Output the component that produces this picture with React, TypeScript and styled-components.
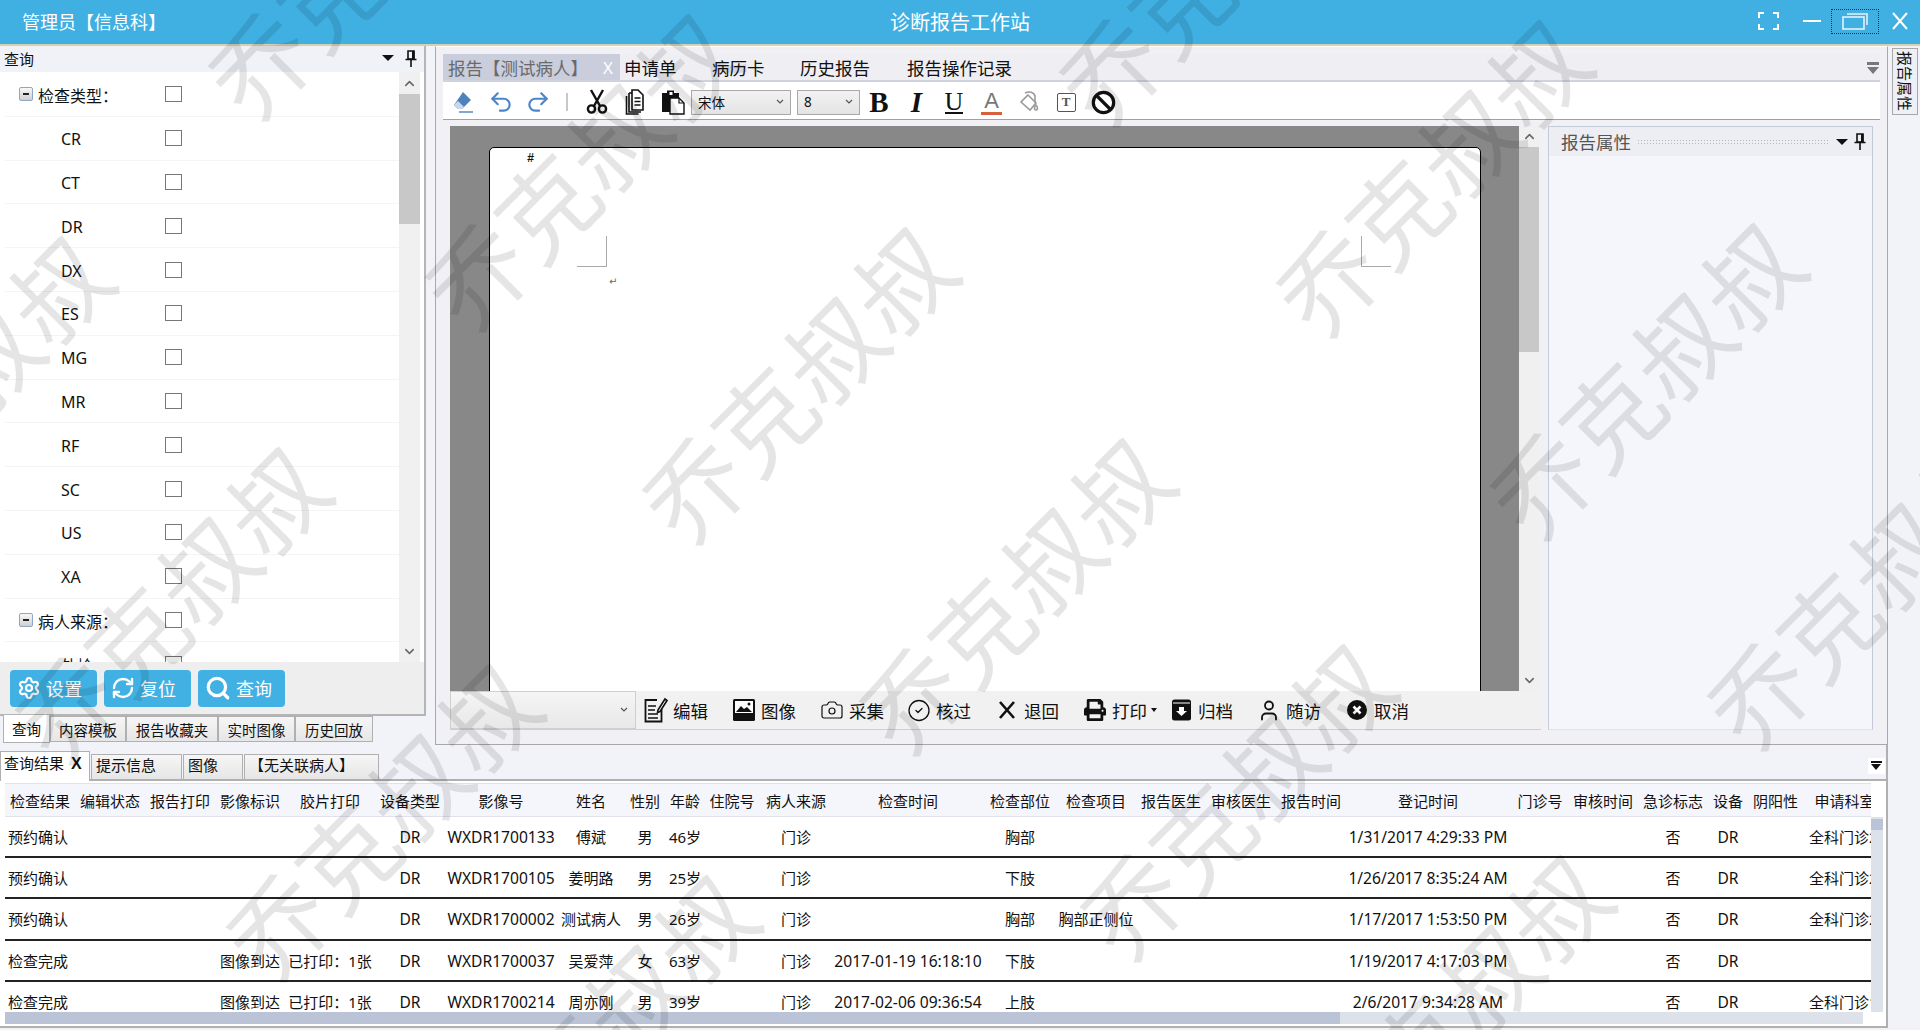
import React from 'react';
import styled, { createGlobalStyle } from 'styled-components';
import { Settings, RefreshCw, Search, Undo2, Redo2, Camera, CircleCheck, User, ChevronUp, ChevronDown } from 'lucide-react';
import { FaPrint } from 'react-icons/fa';

const FONT = '"Noto Sans", "Noto Sans CJK SC", sans-serif';

const GlobalStyle = createGlobalStyle`
  html, body { margin: 0; padding: 0; height: 100%; overflow: hidden; background: #f1f3f9; }
  body { font-family: ${FONT}; color: #111; }
  * { box-sizing: border-box; }
`;

const Page = styled.div`
  position: relative;
  width: 1920px;
  height: 1030px;
  display: flex;
  flex-direction: column;
  overflow: hidden;
  background: #f1f3f9;
`;

const TitleBar = styled.header`
  height: 46px;
  flex: none;
  display: grid;
  grid-template-columns: 1fr auto 1fr;
  align-items: center;
  padding-bottom: 2px;
  background: #40afe2;
  border-bottom: 2px solid #d7cfae;
  color: #fff;
`;
const UserName = styled.div`font-size: 18px; margin-left: 22px;`;
const AppTitle = styled.div`font-size: 20px;`;
const WindowButtons = styled.div`
  display: flex;
  justify-content: flex-end;
  align-items: center;
`;
const WinButton = styled.span<{ $w: number; $focus?: boolean }>`
  width: ${p => p.$w}px;
  height: 25px;
  display: flex;
  align-items: center;
  justify-content: center;
  border: 1px dotted ${p => (p.$focus ? '#10324a' : 'transparent')};
`;

const Main = styled.div`
  height: 699px;
  flex: none;
  display: flex;
`;

/* left query panel */
const LeftColumn = styled.aside`
  width: 426px;
  flex: none;
  display: flex;
  flex-direction: column;
`;
const QueryPanel = styled.section`
  height: 670px;
  display: flex;
  flex-direction: column;
  border-right: 2px solid #b5b5b5;
  border-bottom: 2px solid #b5b5b5;
  background: #fff;
`;
const PanelHead = styled.div`
  height: 26px;
  flex: none;
  display: flex;
  align-items: center;
  padding: 0 7px 2px 4px;
  background: #f0f2f8;
  font-size: 15px;
`;
const Spacer = styled.span`flex: 1;`;
const Gap = styled.span<{ $w: number }>`width: ${p => p.$w}px; flex: none;`;
const Caret = styled.span<{ $color?: string }>`
  width: 0;
  height: 0;
  border-left: 6px solid transparent;
  border-right: 6px solid transparent;
  border-top: 6px solid ${p => p.$color || '#111'};
`;
const TreeWrap = styled.div`
  flex: 1;
  min-height: 0;
  display: flex;
  overflow: hidden;
  padding: 0 4px 0 5px;
`;
const Tree = styled.div`flex: 1; min-width: 0; margin-top: 1px;`;
const TreeRow = styled.div<{ $group?: boolean }>`
  height: 43.8px;
  display: flex;
  align-items: center;
  padding-left: ${p => (p.$group ? 14 : 56)}px;
  border-bottom: 1px solid #f4f4f4;
  font-size: 16px;
`;
const TreeLabel = styled.span`flex: none; width: 104px; padding-top: 2px;`;
const GroupLabel = styled.span`flex: none; width: 127px; margin-left: 4px; padding-top: 2px;`;
const Check = styled.span`
  width: 17px;
  height: 16px;
  flex: none;
  border: 1px solid #777;
  background: #fff;
`;
const Expander = styled.span`
  width: 14px;
  height: 14px;
  flex: none;
  display: flex;
  align-items: center;
  justify-content: center;
  border: 1px solid #8fa6c4;
  border-radius: 2px;
  background: linear-gradient(#f8f8f8, #cfcfcf);
  &::after { content: ''; width: 6px; height: 2px; background: #222; }
`;
const GroupExpander = styled(Expander)`margin-right: 1px;`;
const VScroll = styled.div<{ $w: number }>`
  width: ${p => p.$w}px;
  flex: none;
  display: flex;
  flex-direction: column;
  align-items: center;
  background: #f0f0f0;
  color: #666;
`;
const ScrollEnd = styled.div<{ $h: number }>`
  height: ${p => p.$h}px;
  flex: none;
  display: flex;
  align-items: center;
  justify-content: center;
`;
const ScrollThumb = styled.div<{ $h: number }>`
  width: 100%;
  height: ${p => p.$h}px;
  flex: none;
  background: #c8c8c8;
`;
const ButtonBar = styled.div`
  height: 52px;
  flex: none;
  display: flex;
  gap: 7px;
  padding: 8px 0 0 10px;
  background: #eeeeee;
`;
const ActionButton = styled.button`
  width: 87px;
  height: 37px;
  display: flex;
  align-items: center;
  gap: 5px;
  padding: 0 0 2px 7px;
  border: 0;
  border-radius: 4px;
  background: #41b0e3;
  color: #fff;
  font: 18px ${FONT};
`;
const SideTabs = styled.div`
  display: flex;
  padding-left: 3px;
  height: 29px;
  align-items: flex-start;
`;
const SideTab = styled.span<{ $w: number; $active?: boolean }>`
  width: ${p => p.$w}px;
  height: ${p => (p.$active ? 28 : 26)}px;
  margin-top: ${p => (p.$active ? -1 : 0)}px;
  display: flex;
  align-items: center;
  justify-content: center;
  font-size: 14.5px;
  border: 1px solid #b0b0b0;
  border-top: ${p => (p.$active ? '0' : '1px solid #b0b0b0')};
  background: ${p => (p.$active ? '#fff' : 'linear-gradient(#f6f6f6, #e6e6e6)')};
`;

/* centre report panel */
const CenterFrame = styled.main`
  margin-left: 9px;
  width: 1453px;
  flex: none;
  display: flex;
  flex-direction: column;
  padding: 7px 7px 9px 7px;
  border: 1px solid #a8a8a8;
  border-top-color: #fff;
  background: #f0f0f5;
`;
const TabRow = styled.div`
  height: 28px;
  flex: none;
  display: flex;
  align-items: stretch;
  border-bottom: 2px solid #cfd3e0;
  background: #eeeef3;
`;
const ReportTab = styled.span<{ $w: number; $active?: boolean }>`
  width: ${p => p.$w}px;
  display: flex;
  align-items: center;
  padding-left: ${p => (p.$active ? 5 : 4)}px;
  font-size: 17.5px;
  color: ${p => (p.$active ? '#6a6a6a' : '#111')};
  background: ${p => (p.$active ? '#c9cddc' : 'transparent')};
`;
const TabClose = styled.span`
  margin-left: auto;
  margin-right: 7px;
  color: #fff;
  font-size: 17px;
`;
const TabMenu = styled.span`
  margin-left: auto;
  margin-right: 1px;
  width: 12px;
  padding-top: 8px;
  display: flex;
  flex-direction: column;
  gap: 2px;
  &::before { content: ''; height: 3px; background: #777; }
  &::after { content: ''; width: 0; height: 0; border-left: 6px solid transparent; border-right: 6px solid transparent; border-top: 7px solid #777; }
`;
const Toolbar = styled.div`
  height: 38px;
  flex: none;
  width: 1437px;
  display: flex;
  align-items: center;
  padding-top: 3px;
  background: #fff;
  border-bottom: 1px solid #a0a0a0;
`;
const ToolSlot = styled.span<{ $w: number }>`
  width: ${p => p.$w}px;
  flex: none;
  display: flex;
  align-items: center;
  justify-content: center;
`;
const ToolSep = styled.span`
  width: 2px;
  height: 18px;
  margin: 0 10px;
  background: #c8c8c8;
`;
const ComboBox = styled.span<{ $w: number }>`
  width: ${p => p.$w}px;
  height: 25px;
  flex: none;
  display: flex;
  align-items: center;
  justify-content: space-between;
  padding: 0 6px;
  border: 1px solid #a9a9a9;
  background: linear-gradient(#f2f2f2, #e4e4e4);
  font-size: 13.5px;
  color: #111;
`;
const SerifLetter = styled.span<{ $italic?: boolean; $under?: boolean; $color?: string }>`
  font: ${p => (p.$italic ? 'italic ' : '')}bold 29px "Liberation Serif", serif;
  line-height: 27px;
  color: ${p => p.$color || '#111'};
  ${p => (p.$under ? 'font-weight: normal; border-bottom: 2px solid #111; line-height: 21px; font-family: "Liberation Serif", serif; font-size: 26px;' : '')}
`;
const FontColorA = styled.span`
  font: 22px/22px "Liberation Sans", sans-serif;
  color: #777;
  border-bottom: 3px solid #d8603f;
  padding: 0 3px;
`;
const BoxT = styled.span`
  width: 19px;
  height: 19px;
  display: flex;
  align-items: center;
  justify-content: center;
  border: 1.5px solid #555;
  border-radius: 2px;
  font: bold 13px "Liberation Serif", serif;
  color: #555;
`;
const WorkArea = styled.div`
  flex: 1;
  min-height: 0;
  display: flex;
  padding: 6px 0 5px 7px;
`;
const EditorColumn = styled.div`
  width: 1091px;
  flex: none;
  display: flex;
  flex-direction: column;
`;
const EditorRow = styled.div`
  height: 565px;
  flex: none;
  display: flex;
`;
const DocArea = styled.div`
  width: 1069px;
  flex: none;
  padding: 21px 38px 0 39px;
  overflow: hidden;
  background: #888888;
`;
const Sheet = styled.div`
  position: relative;
  height: 600px;
  background: #fff;
  border: 1px solid #000;
  border-radius: 5px 5px 0 0;
`;
const Hash = styled.span`
  position: absolute;
  left: 37px;
  top: 4px;
  font: bold 12px "Liberation Mono", monospace;
`;
const CropMark = styled.span<{ $x: number; $side: 'left' | 'right' }>`
  position: absolute;
  left: ${p => p.$x}px;
  top: 88px;
  width: 30px;
  height: 31px;
  border-bottom: 1px solid #aaa;
  ${p => (p.$side === 'left' ? 'border-right: 1px solid #aaa;' : 'border-left: 1px solid #aaa;')}
`;
const ReturnMark = styled.span`
  position: absolute;
  left: 119px;
  top: 128px;
  font: 10px "DejaVu Sans", sans-serif;
  color: #666;
`;
const ActionRow = styled.div`
  height: 39px;
  flex: none;
  display: flex;
  align-items: center;
  background: #f1f1f1;
  border-bottom: 1px solid #cfcfcf;
`;
const ActionSelect = styled.span`
  width: 186px;
  height: 38px;
  flex: none;
  display: flex;
  align-items: center;
  justify-content: flex-end;
  padding-right: 7px;
  margin-right: 8px;
  border: 1px solid #cfcfcf;
  background: linear-gradient(#f5f5f5, #e8e8e8);
`;
const ActionItem = styled.span<{ $w: number }>`
  width: ${p => p.$w}px;
  flex: none;
  display: flex;
  align-items: center;
  gap: 5px;
  font-size: 17.5px;
`;
const ActionIcon = styled.span`
  width: 24px;
  height: 26px;
  flex: none;
  display: flex;
  align-items: center;
  justify-content: center;
`;
const MiniCaret = styled.span`
  width: 0;
  height: 0;
  margin-left: -1px;
  border-left: 3px solid transparent;
  border-right: 3px solid transparent;
  border-top: 4px solid #111;
`;
const PropsPanel = styled.aside`
  margin-left: 7px;
  width: 325px;
  flex: none;
  display: flex;
  flex-direction: column;
  border: 1px solid #c5cadb;
  border-bottom-color: #dfe2ec;
  background: #f5f6fb;
`;
const PropsHead = styled.div`
  height: 29px;
  flex: none;
  display: flex;
  align-items: center;
  gap: 6px;
  padding: 0 6px 0 12px;
  background: #eceef3;
  font-size: 17.5px;
  color: #555;
`;
const Dots = styled.span`
  flex: 1;
  height: 6px;
  margin-right: 2px;
  background-image: radial-gradient(#b9b9b9 1px, transparent 1px);
  background-size: 3px 3px;
`;
const RightStrip = styled.div`
  flex: 1;
  padding: 2px 3px 0 4px;
`;
const VerticalTab = styled.span`
  width: 26px;
  height: 67px;
  display: flex;
  align-items: center;
  justify-content: center;
  border: 1px solid #a8a8a8;
  background: #eef0f7;
  writing-mode: vertical-rl;
  text-orientation: sideways;
  font-size: 15px;
`;

/* bottom results */
const ResultsPanel = styled.section`
  flex: 1;
  width: 1888px;
  min-height: 0;
  display: flex;
  flex-direction: column;
  margin-bottom: 2px;
  border-right: 2px solid #b0b0b0;
  border-bottom: 2px solid #b0b0b0;
`;
const ResultTabs = styled.div`
  height: 36px;
  flex: none;
  display: flex;
  align-items: flex-end;
  position: relative;
  border-bottom: 2px solid #b0b0b0;
`;
const ResultTab = styled.span<{ $w: number; $active?: boolean }>`
  width: ${p => p.$w}px;
  height: ${p => (p.$active ? 30 : 25)}px;
  margin-right: 1px;
  margin-bottom: ${p => (p.$active ? -2 : 0)}px;
  display: flex;
  align-items: flex-start;
  padding: ${p => (p.$active ? '1px 0 0 3px' : '0 0 0 4px')};
  font-size: 15px;
  line-height: 21px;
  border: 1px solid #b0b0b0;
  border-bottom: 0;
  background: ${p => (p.$active ? '#fff' : 'linear-gradient(#f6f6f6, #e6e6e6)')};
  position: relative;
`;
const ResultClose = styled.span`
  margin-left: 7px;
  font: bold 16px/22px "Liberation Sans", sans-serif;
`;
const GridMenu = styled.span`
  position: absolute;
  right: 1px;
  top: 13px;
  width: 17px;
  height: 16px;
  padding: 3px 3px 0;
  display: flex;
  flex-direction: column;
  gap: 1px;
  background: #fff;
  &::before { content: ''; height: 2px; background: #111; }
  &::after { content: ''; width: 0; height: 0; border-left: 5.5px solid transparent; border-right: 5.5px solid transparent; border-top: 6px solid #111; }
`;
const GridArea = styled.div`
  flex: 1;
  min-height: 0;
  display: flex;
  flex-direction: column;
  padding: 2px 0 0 5px;
  background: #fff;
`;
const GridBody = styled.div`
  flex: none;
  height: 229px;
  display: flex;
`;
const GridClip = styled.div`
  width: 1866px;
  flex: none;
  overflow: hidden;
`;
const COLUMNS = '70px 70px 70px 70px 90px 70px 112px 68px 40px 40px 54px 74px 150px 74px 78px 72px 68px 72px 162px 62px 64px 76px 34px 61px 77px';
const HeadRow = styled.div`
  height: 34px;
  display: grid;
  grid-template-columns: ${COLUMNS};
  background: #f5f6fc;
  border-top: 1px solid #e0e2ea;
  border-bottom: 1px solid #e0e2ea;
  font-size: 15px;
`;
const BodyRow = styled.div`
  height: 41.2px;
  display: grid;
  grid-template-columns: ${COLUMNS};
  border-bottom: 2px solid #222;
  font-size: 15px;
`;
const Cell = styled.span<{ $left?: boolean; $latin?: boolean }>`
  display: flex;
  align-items: center;
  justify-content: ${p => (p.$left ? 'flex-start' : 'center')};
  padding-left: ${p => (p.$left ? 3 : 0)}px;
  padding-top: ${p => (p.$latin ? 1 : 0)}px;
  font-size: ${p => (p.$latin ? 15.6 : 15)}px;
  white-space: nowrap;
  min-width: 0;
`;
const GridScrollV = styled.div`
  width: 12px;
  margin: 34px 0 0 0;
  flex: none;
  background: #dde1ea;
`;
const GridThumbV = styled.div`
  height: 11px;
  margin-top: 2px;
  background: #bac4d6;
`;
const GridScrollH = styled.div`
  width: 1858px;
  height: 12px;
  flex: none;
  background: #dde1ea;
`;
const GridThumbH = styled.div`
  width: 1335px;
  height: 100%;
  background: #bac4d6;
`;

/* watermark over the whole window */
const WatermarkLayer = styled.div`
  position: absolute;
  inset: 0;
  overflow: hidden;
  pointer-events: none;
`;
const Mark = styled.span<{ $x: number; $y: number }>`
  position: absolute;
  left: ${p => p.$x}px;
  top: ${p => p.$y}px;
  transform: translate(-50%, -50%) rotate(-45deg);
  font: 400 98px/1 "Noto Sans CJK SC", sans-serif;
  white-space: nowrap;
  color: rgba(0, 0, 0, 0.1);
`;

const Pin = ({ color = '#111' }: { color?: string }) => (
  <svg width="12" height="17" viewBox="0 0 12 17">
    <path d="M3 1h6v8H3z" fill="none" stroke={color} strokeWidth="1.6" />
    <path d="M7 1h2.4v8H7z" fill={color} />
    <path d="M0.5 9.5h11M6 9.5V17" stroke={color} strokeWidth="1.6" />
  </svg>
);

const EraserIcon = () => (
  <svg width="24" height="26" viewBox="0 0 24 26">
    <path d="M12 3l8 8-9 9H7l-4-4z" fill="#4f81bd" />
    <path d="M3 16l4 4h4l2-2-6-6z" fill="#c7d7ec" />
    <path d="M8 23h14" stroke="#4f81bd" strokeWidth="1.4" />
  </svg>
);
const ScissorsIcon = () => (
  <svg width="24" height="26" viewBox="0 0 24 26" fill="none" stroke="#111" strokeWidth="2.4">
    <path d="M6 1l9 16M18 1L9 17" />
    <circle cx="6.5" cy="20" r="3.6" />
    <circle cx="17.5" cy="20" r="3.6" />
  </svg>
);
const CopyIcon = () => (
  <svg width="20" height="26" viewBox="0 0 20 26" fill="none" stroke="#111" strokeWidth="1.6">
    <path d="M7 1h6l5 5v15H7z" />
    <path d="M4 4h3M4 4v19h12" />
    <path d="M1.5 7v18h12" />
    <path d="M9.5 9h6M9.5 12.5h6M9.5 16h6" strokeWidth="1.4" />
  </svg>
);
const PasteIcon = () => (
  <svg width="24" height="26" viewBox="0 0 24 26">
    <path d="M1 4h5V1.5h7V4h5v19H1z" fill="#111" />
    <path d="M8.5 3h3v3h-3z" fill="#fff" />
    <path d="M9 9h9l5 5v11H9z" fill="#fff" stroke="#111" strokeWidth="1.4" />
    <path d="M18 9v5h5" fill="none" stroke="#111" strokeWidth="1.2" />
  </svg>
);
const ComboArrow = () => (
  <svg width="8" height="6" viewBox="0 0 8 6" fill="none" stroke="#555" strokeWidth="1.2"><path d="M1 1l3 3 3-3" /></svg>
);
const BucketIcon = () => (
  <svg width="22" height="24" viewBox="0 0 22 24" fill="none" stroke="#9a9a9a" strokeWidth="1.6">
    <path d="M10 5l8 8-6 7-9-8z" />
    <path d="M7 3c4-2 9-1 10 3v7" />
    <path d="M18 15c2 2 2 5 0 5s-2-3 0-5z" />
  </svg>
);
const NoIcon = () => (
  <svg width="25" height="25" viewBox="0 0 25 25" fill="none" stroke="#111" strokeWidth="3.2">
    <circle cx="12.5" cy="12.5" r="10.2" />
    <path d="M5.5 5.5l14 14" />
  </svg>
);
const EditIcon = () => (
  <svg width="24" height="26" viewBox="0 0 24 26" fill="none" stroke="#111" strokeWidth="1.8">
    <path d="M13 3H1.5v21.5h16V12" />
    <path d="M4 9h8M4 13h7M4 17h10M4 21h10" strokeWidth="1.6" />
    <path d="M14 13l7-11 2 1.5-7 11-2.5 1z" fill="#fff" strokeWidth="1.6" />
  </svg>
);
const PictureIcon = () => (
  <svg width="22" height="24" viewBox="0 0 22 24">
    <rect x="0" y="1" width="22" height="22" rx="1.5" fill="#111" />
    <rect x="2" y="3" width="18" height="12" fill="#fff" />
    <path d="M3 14l5-6 3 3 3-2 5 5z" fill="#111" />
    <circle cx="16" cy="6" r="1.5" fill="#111" />
  </svg>
);
const XIcon = ({ size = 18, color = '#111', width = 2.6 }: { size?: number; color?: string; width?: number }) => (
  <svg width={size} height={size} viewBox="0 0 18 18" fill="none" stroke={color} strokeWidth={width}>
    <path d="M2 1l14 16M16 1L2 17" />
  </svg>
);
const ArchiveIcon = () => (
  <svg width="19" height="22" viewBox="0 0 19 22">
    <rect x="0" y="0.5" width="19" height="21" rx="2.5" fill="#111" />
    <path d="M1 4h17" stroke="#fff" strokeWidth="1" />
    <path d="M7 8h5v4h3l-5.5 5L4 12h3z" fill="#fff" />
  </svg>
);
const CancelIcon = () => (
  <svg width="20" height="20" viewBox="0 0 20 20">
    <circle cx="10" cy="10" r="10" fill="#111" />
    <path d="M6.5 6.5l7 7M13.5 6.5l-7 7" stroke="#fff" strokeWidth="2.6" />
  </svg>
);

const treeTypes = ['CR', 'CT', 'DR', 'DX', 'ES', 'MG', 'MR', 'RF', 'SC', 'US', 'XA'];

const headers = ['检查结果', '编辑状态', '报告打印', '影像标识', '胶片打印', '设备类型', '影像号', '姓名', '性别', '年龄', '住院号', '病人来源', '检查时间', '检查部位', '检查项目', '报告医生', '审核医生', '报告时间', '登记时间', '门诊号', '审核时间', '急诊标志', '设备', '阴阳性', '申请科室'];

const makeRow = (status: string, mark: string, film: string, id: string, name: string, sex: string, age: string, time: string, part: string, item: string, reg: string, dept: string) =>
  [status, '', '', mark, film, 'DR', id, name, sex, age, '', '门诊', time, part, item, '', '', '', reg, '', '', '否', 'DR', '', dept];

const rows = [
  makeRow('预约确认', '', '', 'WXDR1700133', '傅斌', '男', '46岁', '', '胸部', '', '1/31/2017 4:29:33 PM', '全科门诊2室'),
  makeRow('预约确认', '', '', 'WXDR1700105', '姜明路', '男', '25岁', '', '下肢', '', '1/26/2017 8:35:24 AM', '全科门诊2室'),
  makeRow('预约确认', '', '', 'WXDR1700002', '测试病人', '男', '26岁', '', '胸部', '胸部正侧位', '1/17/2017 1:53:50 PM', '全科门诊2室'),
  makeRow('检查完成', '图像到达', '已打印：1张', 'WXDR1700037', '吴爱萍', '女', '63岁', '2017-01-19 16:18:10', '下肢', '', '1/19/2017 4:17:03 PM', ''),
  makeRow('检查完成', '图像到达', '已打印：1张', 'WXDR1700214', '周亦刚', '男', '39岁', '2017-02-06 09:36:54', '上肢', '', '2/6/2017 9:34:28 AM', '全科门诊1室'),
];

const latinColumns = [5, 6, 12, 18, 22];

const marks = [
  [361, -42], [578, 169], [795, 382], [1012, 593], [1233, 799], [1450, 1010],
  [-49, 391], [168, 602], [379, 819], [596, 1030],
  [1212, -36], [1429, 175], [1643, 378], [1860, 588],
];

const App = () => {
  return (
    <Page>
      <GlobalStyle />
      <TitleBar>
        <UserName>管理员【信息科】</UserName>
        <AppTitle>诊断报告工作站</AppTitle>
        <WindowButtons>
          <WinButton $w={50}>
            <svg width="21" height="18" viewBox="0 0 21 18" fill="none" stroke="#fff" strokeWidth="2">
              <path d="M1 6V1h5M15 1h5v5M20 12v5h-5M6 17H1v-5" />
            </svg>
          </WinButton>
          <WinButton $w={38}>
            <svg width="18" height="4" viewBox="0 0 18 4"><path d="M0 2h18" stroke="#fff" strokeWidth="2" /></svg>
          </WinButton>
          <WinButton $w={48} $focus>
            <svg width="26" height="17" viewBox="0 0 26 17" fill="none" stroke="#dff3fc" strokeWidth="1.6">
              <rect x="1" y="4" width="21" height="12" />
              <path d="M5 1h20v11" />
            </svg>
          </WinButton>
          <WinButton $w={41}><XIcon size={18} color="#fff" width={2} /></WinButton>
        </WindowButtons>
      </TitleBar>

      <Main>
        <LeftColumn>
          <QueryPanel>
            <PanelHead>
              查询
              <Spacer />
              <Caret />
              <Gap $w={11} />
              <Pin />
            </PanelHead>
            <TreeWrap>
              <Tree>
                <TreeRow $group><GroupExpander /><GroupLabel>检查类型：</GroupLabel><Check /></TreeRow>
                {treeTypes.map(t => (
                  <TreeRow key={t}><TreeLabel>{t}</TreeLabel><Check /></TreeRow>
                ))}
                <TreeRow $group><GroupExpander /><GroupLabel>病人来源：</GroupLabel><Check /></TreeRow>
                <TreeRow><TreeLabel>外检</TreeLabel><Check /></TreeRow>
              </Tree>
              <VScroll $w={21}>
                <ScrollEnd $h={22}><ChevronUp size={15} strokeWidth={2.4} /></ScrollEnd>
                <ScrollThumb $h={130} />
                <Spacer />
                <ScrollEnd $h={22}><ChevronDown size={15} strokeWidth={2.4} /></ScrollEnd>
              </VScroll>
            </TreeWrap>
            <ButtonBar>
              <ActionButton><Settings size={24} strokeWidth={2.2} />设置</ActionButton>
              <ActionButton><RefreshCw size={24} strokeWidth={2.4} />复位</ActionButton>
              <ActionButton><Search size={26} strokeWidth={3} />查询</ActionButton>
            </ButtonBar>
          </QueryPanel>
          <SideTabs>
            <SideTab $w={47} $active>查询</SideTab>
            <SideTab $w={76}>内容模板</SideTab>
            <SideTab $w={92}>报告收藏夹</SideTab>
            <SideTab $w={77}>实时图像</SideTab>
            <SideTab $w={78}>历史回放</SideTab>
          </SideTabs>
        </LeftColumn>

        <CenterFrame>
          <TabRow>
            <ReportTab $w={177} $active>报告【测试病人】<TabClose>X</TabClose></ReportTab>
            <ReportTab $w={88}>申请单</ReportTab>
            <ReportTab $w={88}>病历卡</ReportTab>
            <ReportTab $w={107}>历史报告</ReportTab>
            <ReportTab $w={120}>报告操作记录</ReportTab>
            <TabMenu />
          </TabRow>
          <Toolbar>
            <ToolSlot $w={39}><EraserIcon /></ToolSlot>
            <ToolSlot $w={37}><Undo2 size={26} color="#4a86c8" strokeWidth={2} /></ToolSlot>
            <ToolSlot $w={37}><Redo2 size={26} color="#4a86c8" strokeWidth={2} /></ToolSlot>
            <ToolSep />
            <ToolSlot $w={38}><ScissorsIcon /></ToolSlot>
            <ToolSlot $w={38}><CopyIcon /></ToolSlot>
            <ToolSlot $w={37}><PasteIcon /></ToolSlot>
            <ComboBox $w={100}>宋体<ComboArrow /></ComboBox>
            <Gap $w={6} />
            <ComboBox $w={63}>8<ComboArrow /></ComboBox>
            <ToolSlot $w={38}><SerifLetter>B</SerifLetter></ToolSlot>
            <ToolSlot $w={37}><SerifLetter $italic>I</SerifLetter></ToolSlot>
            <ToolSlot $w={38}><SerifLetter $under>U</SerifLetter></ToolSlot>
            <ToolSlot $w={37}><FontColorA>A</FontColorA></ToolSlot>
            <ToolSlot $w={37}><BucketIcon /></ToolSlot>
            <ToolSlot $w={38}><BoxT>T</BoxT></ToolSlot>
            <ToolSlot $w={37}><NoIcon /></ToolSlot>
          </Toolbar>
          <WorkArea>
            <EditorColumn>
              <EditorRow>
                <DocArea>
                  <Sheet>
                    <Hash>#</Hash>
                    <CropMark $x={87} $side="left" />
                    <CropMark $x={871} $side="right" />
                    <ReturnMark>↵</ReturnMark>
                  </Sheet>
                </DocArea>
                <VScroll $w={20}>
                  <ScrollEnd $h={21}><ChevronUp size={15} strokeWidth={2.4} /></ScrollEnd>
                  <ScrollThumb $h={205} />
                  <Spacer />
                  <ScrollEnd $h={22}><ChevronDown size={15} strokeWidth={2.4} /></ScrollEnd>
                </VScroll>
              </EditorRow>
              <ActionRow>
                <ActionSelect><ComboArrow /></ActionSelect>
                <ActionItem $w={88}><ActionIcon><EditIcon /></ActionIcon>编辑</ActionItem>
                <ActionItem $w={88}><ActionIcon><PictureIcon /></ActionIcon>图像</ActionItem>
                <ActionItem $w={87}><ActionIcon><Camera size={28} strokeWidth={1.2} /></ActionIcon>采集</ActionItem>
                <ActionItem $w={88}><ActionIcon><CircleCheck size={25} strokeWidth={1.3} /></ActionIcon>核过</ActionItem>
                <ActionItem $w={88}><ActionIcon><XIcon /></ActionIcon>退回</ActionItem>
                <ActionItem $w={86}><ActionIcon><FaPrint size={22} /></ActionIcon>打印<MiniCaret /></ActionItem>
                <ActionItem $w={88}><ActionIcon><ArchiveIcon /></ActionIcon>归档</ActionItem>
                <ActionItem $w={88}><ActionIcon><User size={31} strokeWidth={1.8} /></ActionIcon>随访</ActionItem>
                <ActionItem $w={88}><ActionIcon><CancelIcon /></ActionIcon>取消</ActionItem>
              </ActionRow>
            </EditorColumn>
            <PropsPanel>
              <PropsHead>
                报告属性
                <Dots />
                <Caret />
                <Pin />
              </PropsHead>
            </PropsPanel>
          </WorkArea>
        </CenterFrame>

        <RightStrip>
          <VerticalTab>报告属性</VerticalTab>
        </RightStrip>
      </Main>

      <ResultsPanel>
        <ResultTabs>
          <ResultTab $w={90} $active>查询结果<ResultClose>X</ResultClose></ResultTab>
          <ResultTab $w={91}>提示信息</ResultTab>
          <ResultTab $w={60}>图像</ResultTab>
          <ResultTab $w={135}>【无关联病人】</ResultTab>
          <GridMenu />
        </ResultTabs>
        <GridArea>
          <GridBody>
            <GridClip>
              <HeadRow>
                {headers.map(h => <Cell key={h}>{h}</Cell>)}
              </HeadRow>
              {rows.map(r => (
                <BodyRow key={r[6]}>
                  {r.map((c, i) => <Cell key={i} $left={i === 0 || i === 24} $latin={latinColumns.includes(i)}>{c}</Cell>)}
                </BodyRow>
              ))}
            </GridClip>
            <GridScrollV><GridThumbV /></GridScrollV>
          </GridBody>
          <GridScrollH><GridThumbH /></GridScrollH>
        </GridArea>
      </ResultsPanel>

      <WatermarkLayer>
        {marks.map(([x, y]) => <Mark key={`${x}-${y}`} $x={x} $y={y}>乔克叔叔</Mark>)}
      </WatermarkLayer>
    </Page>
  );
};

export default App;
